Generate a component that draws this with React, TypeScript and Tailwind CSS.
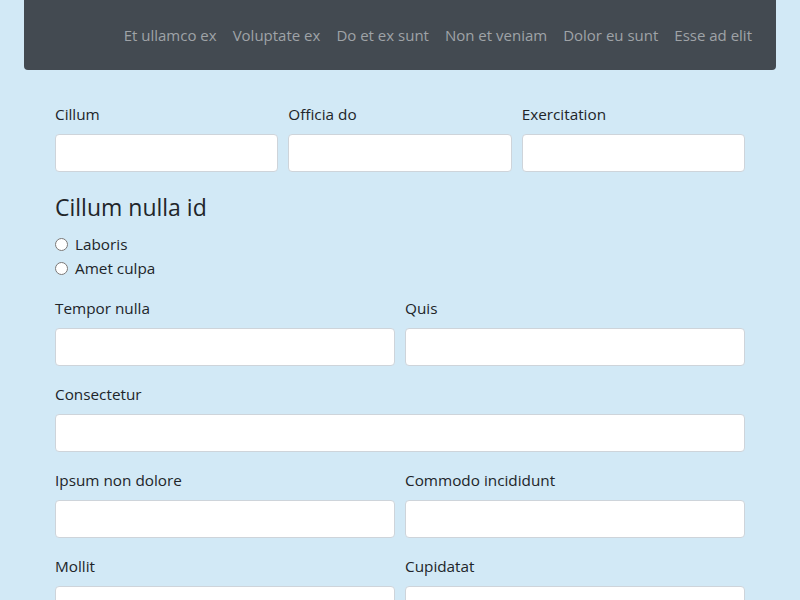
import React from "react";

const navLinks = [
  "Et ullamco ex",
  "Voluptate ex",
  "Do et ex sunt",
  "Non et veniam",
  "Dolor eu sunt",
  "Esse ad elit",
];

const Field = ({ label }: { label: string }) => (
  <div className="flex-1 px-[5px] mb-4">
    <label className="block mb-2 text-[15.3px] leading-6 text-[#212529]">{label}</label>
    <input
      type="text"
      className="block w-full h-[38px] bg-white border border-[#ced4da] rounded"
    />
  </div>
);

export default function App() {
  return (
    <div
      className="min-h-[600px] bg-[#d2e9f6] text-[#212529]"
      style={{ fontFamily: '"Open Sans", "Noto Sans", sans-serif' }}
    >
      <nav className="mx-6 h-[70px] bg-[#434a51] rounded-b flex items-center justify-end px-4">
        <ul className="flex">
          {navLinks.map((l) => (
            <li key={l} className="px-2 text-[15px] text-[#9fa3a7]">
              {l}
            </li>
          ))}
        </ul>
      </nav>

      <form className="w-[720px] mx-auto px-[15px] pt-8">
        <div className="flex -mx-[5px]">
          <Field label="Cillum" />
          <Field label="Officia do" />
          <Field label="Exercitation" />
        </div>

        <h4 className="text-[23px] leading-[29px] mt-[5px] mb-[10px]">Cillum nulla id</h4>
        <div className="mb-4">
          {["Laboris", "Amet culpa"].map((r) => (
            <label key={r} className="flex items-center h-6 text-[15.3px]">
              <input type="radio" name="cillum" className="w-[13px] h-[13px] mr-[7px]" />
              {r}
            </label>
          ))}
        </div>

        <div className="flex -mx-[5px]">
          <Field label="Tempor nulla" />
          <Field label="Quis" />
        </div>
        <div className="flex -mx-[5px]">
          <Field label="Consectetur" />
        </div>
        <div className="flex -mx-[5px]">
          <Field label="Ipsum non dolore" />
          <Field label="Commodo incididunt" />
        </div>
        <div className="flex -mx-[5px]">
          <Field label="Mollit" />
          <Field label="Cupidatat" />
        </div>
      </form>
    </div>
  );
}
